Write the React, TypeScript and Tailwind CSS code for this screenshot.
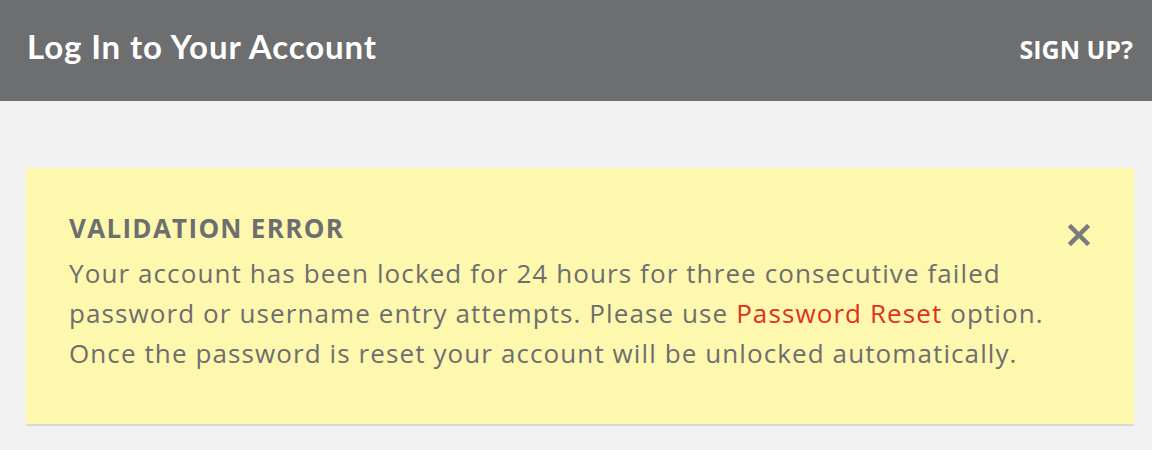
import React from "react";

export default function App() {
  return (
    <div className="min-h-[450px] w-[1152px] bg-[#f1f1f1]" style={{ fontFamily: "'Open Sans', Lato, sans-serif" }}>
      <header className="flex h-[101px] items-center justify-between bg-[#6d6e70] pl-[27px] pr-[19px] text-white">
        <h1
          className="mt-[-10px] text-[33px] font-bold leading-[40px] tracking-[0.9px]"
          style={{ fontFamily: "Lato, 'Open Sans', sans-serif" }}
        >
          Log In to Your Account
        </h1>
        <a className="mt-[-4px] text-[25px] font-bold leading-[30px]">SIGN UP?</a>
      </header>
      <div className="pl-[26px] pr-[18px] pt-[67px]">
        <div className="relative border-b-2 border-[#d8d8d8] bg-[#fef7ae] pb-[51px] pl-[43px] pr-[80px] pt-[45px] text-[#6d6e70]">
          <h2 className="text-[26px] font-bold leading-[30px] tracking-[1.3px]">VALIDATION ERROR</h2>
          <p className="mt-[10px] whitespace-nowrap text-[26px] leading-[40px] tracking-[1.1px]">
            Your account has been locked for 24 hours for three consecutive failed
            <br />
            password or username entry attempts. Please use <a className="text-[#e0301e]">Password Reset</a> option.
            <br />
            Once the password is reset your account will be unlocked automatically.
          </p>
          <button className="absolute right-[44px] top-[56px] text-[#7a7b7d]">
            <svg width="22" height="22" viewBox="0 0 22 22">
              <path d="M3 3L19 19M19 3L3 19" stroke="currentColor" strokeWidth="4.5" strokeLinecap="square" />
            </svg>
          </button>
        </div>
      </div>
    </div>
  );
}
